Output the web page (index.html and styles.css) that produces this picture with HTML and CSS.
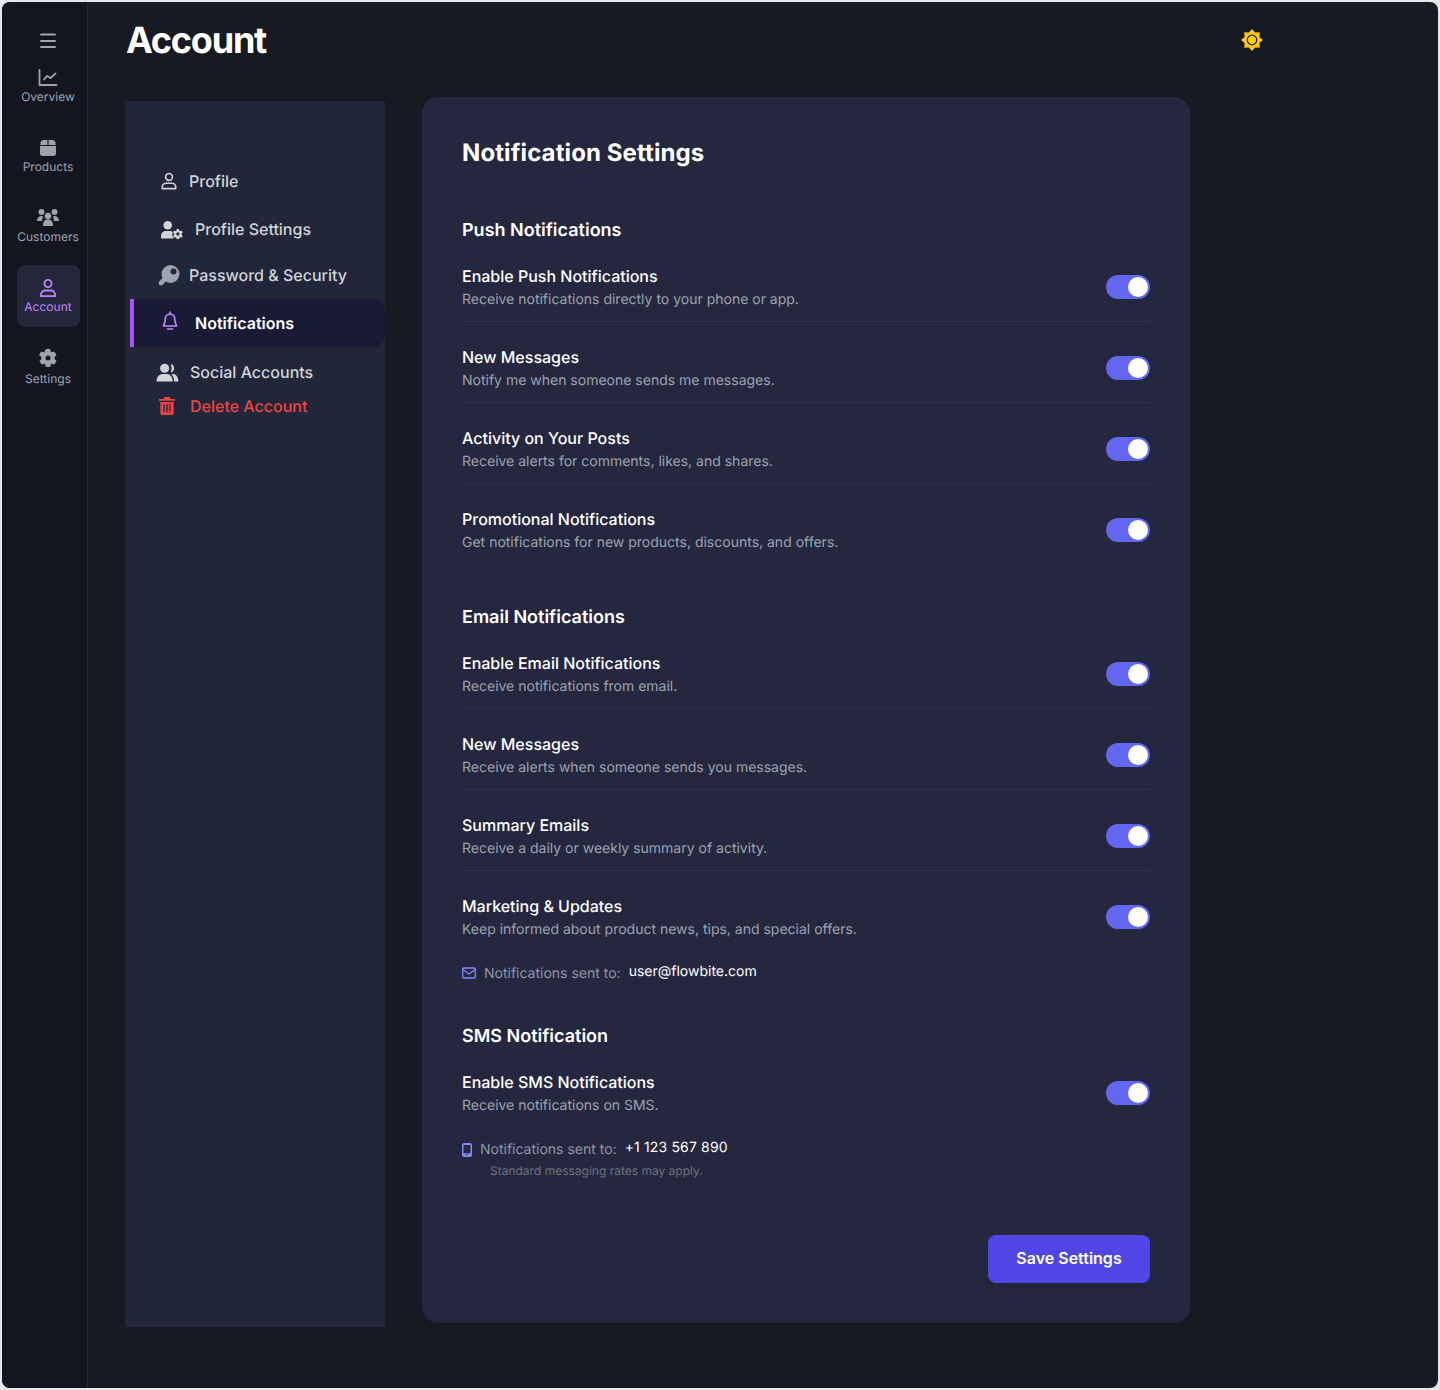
FILE: index.html
```html
<!DOCTYPE html>
<html lang="en">
<head>
<meta charset="utf-8">
<title>Account</title>
<link rel="stylesheet" href="styles.css">
</head>
<body>
<div class="frame">
  <aside class="rail">
    <button class="rail-menu" aria-label="Menu">
      <svg class="ic-16" viewBox="0 0 16 16" fill="none" stroke="currentColor" stroke-width="1.900" stroke-linecap="round"><path d="M1 1.500h14M1 8h14M1 14h14"/></svg>
    </button>
    <nav class="rail-nav">
      <a class="rail-item">
        <svg class="ic-20" viewBox="0 0 20 20" fill="none" stroke="currentColor" stroke-width="1.800" stroke-linecap="round" stroke-linejoin="round"><path d="M1.500 2v15h17"/><path d="M6 11.500l3-3.500 3.500 2 5-4.500"/></svg>
        <span>Overview</span>
      </a>
      <a class="rail-item">
        <svg class="ic-20" viewBox="0 0 20 20" fill="currentColor"><path d="M9.400 2H5.500C4 2 3 3 2.600 4.300L2.200 6.900h7.200zM10.600 2h3.900c1.500 0 2.500 1 2.900 2.300l.4 2.600h-7.200z"/><path d="M2 8h16v7.500c0 1.500-1 2.500-2.500 2.500h-11C3 18 2 17 2 15.500z"/></svg>
        <span>Products</span>
      </a>
      <a class="rail-item">
        <svg class="ic-24" viewBox="0 0 24 24" fill="currentColor"><circle cx="5.500" cy="6" r="3"/><circle cx="18.500" cy="6" r="3"/><circle cx="12" cy="10" r="3.200"/><path d="M1 15c0-3 2-5 4.500-5 .8 0 1.300.2 1.800.5-.8 1-1.300 2.500-1.300 4.500H1zM23 15c0-3-2-5-4.500-5-.8 0-1.300.2-1.800.5.800 1 1.300 2.500 1.300 4.500H23zM7 19c0-3.500 2-5.500 5-5.500s5 2 5 5.500v1H7z"/></svg>
        <span>Customers</span>
      </a>
      <a class="rail-item is-active">
        <svg class="ic-20" viewBox="0 0 20 20" fill="none" stroke="currentColor" stroke-width="1.800" stroke-linejoin="round"><circle cx="10" cy="5.500" r="3.600"/><path d="M3 18.200v-1.400c0-2.700 2-4.300 4.300-4.300h5.400c2.300 0 4.300 1.600 4.300 4.300v1.400z"/></svg>
        <span>Account</span>
      </a>
      <a class="rail-item rail-item-last">
        <svg class="ic-20" viewBox="0 0 20 20" fill="currentColor" fill-rule="evenodd"><path d="M7.800 1h4.400l.5 2.400 1.300.8 2.400-.8 2.200 3.800-1.900 1.600v2.400l1.900 1.600-2.200 3.800-2.400-.8-1.300.8-.5 2.400H7.800l-.5-2.400-1.300-.8-2.400.8-2.200-3.800 1.900-1.600V8.800L.9 7.200l2.200-3.800 2.400.8 1.300-.8zM10 7.500a2.500 2.500 0 1 0 0 5 2.500 2.500 0 0 0 0-5z"/></svg>
        <span>Settings</span>
      </a>
    </nav>
  </aside>

  <main class="main">
    <header class="topbar">
      <h1 class="page-title">Account</h1>
      <svg class="sun" viewBox="0 0 22 22"><polygon fill="#facc15" points="11,0 14.060,3.610 18.780,3.220 18.390,7.940 22,11 18.390,14.060 18.780,18.780 14.060,18.390 11,22 7.940,18.390 3.220,18.780 3.610,14.060 0,11 3.610,7.940 3.220,3.220 7.940,3.610"/><circle cx="11" cy="11" r="4.800" fill="#facc15" stroke="#1f2230" stroke-width="1.200"/></svg>
    </header>
    <div class="columns">
      <nav class="side">
        <a class="side-item side-profile">
          <svg class="ic-18" viewBox="0 0 20 20" fill="none" stroke="currentColor" stroke-width="1.800" stroke-linejoin="round"><circle cx="10" cy="5.500" r="3.800"/><path d="M2.500 18.500v-1.800c0-2.500 2-4.200 4.300-4.200h6.400c2.300 0 4.300 1.700 4.300 4.200v1.800z"/></svg>
          <span>Profile</span>
        </a>
        <a class="side-item side-psettings">
          <svg class="ic-psettings" viewBox="0 0 24 20" fill="currentColor"><circle cx="8" cy="5.500" r="4.500"/><path d="M1 19.500v-2.500c0-3.500 2.500-5.500 5-5.500h4c1.500 0 2.500.5 3.500 1.300-1 1.500-1 4.700 1 6.700z"/><path fill-rule="evenodd" d="M17.500 9.500h2.400l.4 1.700 1 .5 1.600-.5.900 2-1.200 1.100v1.300l1.200 1.100-.9 2-1.600-.5-1 .5-.4 1.700h-2.400l-.4-1.700-1-.5-1.600.5-.9-2 1.200-1.100v-1.300l-1.200-1.100.9-2 1.600.5 1-.5zM18.700 13a1.700 1.700 0 1 0 0 3.400 1.700 1.700 0 0 0 0-3.400z"/></svg>
          <span>Profile Settings</span>
        </a>
        <a class="side-item side-password">
          <svg class="ic-key" viewBox="0 0 22 22"><path fill="currentColor" fill-rule="evenodd" d="M12.500 1a9 9 0 1 1 0 18 9 9 0 0 1 0-18zm3 3.500a3 3 0 1 0 0 6 3 3 0 0 0 0-6z"/><path fill="none" stroke="currentColor" stroke-width="4.600" stroke-linecap="round" d="M7 15l-4 4"/></svg>
          <span>Password &amp; Security</span>
        </a>
        <a class="side-item side-notify">
          <svg class="ic-20" viewBox="0 0 20 20" fill="none" stroke="currentColor" stroke-width="1.700" stroke-linecap="round" stroke-linejoin="round"><path d="M10 1v2.200M10 3.200c-3 0-4.800 2.300-4.800 5 0 4.300-1.700 5.400-1.700 6.800h13c0-1.400-1.700-2.500-1.700-6.800 0-2.700-1.800-5-4.800-5zM7.500 18h5"/></svg>
          <span>Notifications</span>
        </a>
        <a class="side-item side-social">
          <svg class="ic-social" viewBox="0 0 24 20" fill="currentColor"><circle cx="9" cy="5.500" r="4.800"/><path d="M15.300 1a4.600 4.600 0 0 1 0 9c1.300-2.600 1.300-6.400 0-9zM.5 19.500c0-5 3-8 6-8h5c3 0 6 3 6 8z"/><path d="M16 11.500h2c3 0 5.500 3.500 5.500 8h-4.500c0-3-1-6.200-3-8z"/></svg>
          <span>Social Accounts</span>
        </a>
        <a class="side-item side-delete">
          <svg class="ic-trash" viewBox="0 0 18 20" fill="currentColor"><path d="M6 0h6l1 2h5v2H0V2h5z"/><path fill-rule="evenodd" d="M1.500 5.500h15V18c0 1.100-.9 2-2 2h-11c-1.100 0-2-.9-2-2zM5 8v9h1.500V8zm3.250 0v9h1.500V8zM11.500 8v9H13V8z"/></svg>
          <span>Delete Account</span>
        </a>
      </nav>

      <section class="card">
        <h2 class="card-title">Notification Settings</h2>

        <div class="group">
          <h3 class="group-title">Push Notifications</h3>
          <div class="row">
            <div class="row-text"><div class="row-name">Enable Push Notifications</div><div class="row-desc">Receive notifications directly to your phone or app.</div></div>
            <span class="toggle"><span class="knob"></span></span>
          </div>
          <div class="row">
            <div class="row-text"><div class="row-name">New Messages</div><div class="row-desc">Notify me when someone sends me messages.</div></div>
            <span class="toggle"><span class="knob"></span></span>
          </div>
          <div class="row">
            <div class="row-text"><div class="row-name">Activity on Your Posts</div><div class="row-desc">Receive alerts for comments, likes, and shares.</div></div>
            <span class="toggle"><span class="knob"></span></span>
          </div>
          <div class="row row-last">
            <div class="row-text"><div class="row-name">Promotional Notifications</div><div class="row-desc">Get notifications for new products, discounts, and offers.</div></div>
            <span class="toggle"><span class="knob"></span></span>
          </div>
        </div>

        <div class="group group-email">
          <h3 class="group-title">Email Notifications</h3>
          <div class="row">
            <div class="row-text"><div class="row-name">Enable Email Notifications</div><div class="row-desc">Receive notifications from email.</div></div>
            <span class="toggle"><span class="knob"></span></span>
          </div>
          <div class="row">
            <div class="row-text"><div class="row-name">New Messages</div><div class="row-desc">Receive alerts when someone sends you messages.</div></div>
            <span class="toggle"><span class="knob"></span></span>
          </div>
          <div class="row">
            <div class="row-text"><div class="row-name">Summary Emails</div><div class="row-desc">Receive a daily or weekly summary of activity.</div></div>
            <span class="toggle"><span class="knob"></span></span>
          </div>
          <div class="row row-last">
            <div class="row-text"><div class="row-name">Marketing &amp; Updates</div><div class="row-desc">Keep informed about product news, tips, and special offers.</div></div>
            <span class="toggle"><span class="knob"></span></span>
          </div>
          <div class="sent sent-email">
            <svg class="ic-mail" viewBox="0 0 14 12" fill="none" stroke="currentColor" stroke-width="1.300" stroke-linejoin="round"><rect x=".7" y="1" width="12.600" height="10" rx="1.200"/><path d="M.9 2.400L7 7l6.100-4.600"/></svg>
            <span class="sent-label">Notifications sent to:</span>
            <span class="sent-value">user@flowbite.com</span>
          </div>
        </div>

        <div class="group group-sms">
          <h3 class="group-title">SMS Notification</h3>
          <div class="row row-last">
            <div class="row-text"><div class="row-name">Enable SMS Notifications</div><div class="row-desc">Receive notifications on SMS.</div></div>
            <span class="toggle"><span class="knob"></span></span>
          </div>
          <div class="sent sent-sms">
            <svg class="ic-phone" viewBox="0 0 10 14" fill="currentColor" fill-rule="evenodd"><path d="M2 0h6a2 2 0 0 1 2 2v10a2 2 0 0 1-2 2H2a2 2 0 0 1-2-2V2a2 2 0 0 1 2-2zM1.500 2v8.300h7V2zM5 11a.8.8 0 1 0 0 1.600A.8.800 0 0 0 5 11z"/></svg>
            <span class="sent-label">Notifications sent to:</span>
            <span class="sent-value sent-phone">+1 123 567 890</span>
          </div>
          <div class="sent-note">Standard messaging rates may apply.</div>
        </div>

        <div class="actions"><button class="save">Save Settings</button></div>
      </section>
    </div>
  </main>
</div>
</body>
</html>
```
FILE: styles.css
```css
* { box-sizing: border-box; }
html, body { margin: 0; padding: 0; }
body {
  width: 1440px;
  height: 1390px;
  background: #e5e7eb;
  font-family: Inter, "Liberation Sans", sans-serif;
  color: #fff;
  overflow: hidden;
  text-rendering: geometricPrecision;
}
h1, h2, h3 { margin: 0; }
a { display: flex; text-decoration: none; }
svg { display: block; flex: none; }

.frame {
  display: flex;
  width: 1440px;
  height: 1390px;
  border: 2px solid #e5e7eb;
  border-radius: 10px;
  overflow: hidden;
  background: #171a23;
}

/* left rail */
.rail {
  width: 86px;
  flex: none;
  background: #131621;
  border-right: 1px solid #222636;
  display: flex;
  flex-direction: column;
  align-items: center;
  padding-left: 7px;
}
.rail-menu {
  background: none;
  border: 0;
  padding: 0;
  margin-top: 31px;
  height: 16px;
  color: #9ca3af;
}
.ic-16 { width: 16px; height: 16px; }
.ic-18 { width: 18px; height: 18px; }
.ic-20 { width: 20px; height: 20px; }
.ic-24 { width: 24px; height: 24px; }
.rail-nav {
  display: flex;
  flex-direction: column;
  gap: 8px;
  margin-top: 6px;
}
.rail-item {
  width: 63px;
  height: 62px;
  border-radius: 8px;
  flex-direction: column;
  align-items: center;
  padding-top: 13px;
  color: #9ca3af;
  font-size: 12px;
  line-height: 16px;
  white-space: nowrap;
}
.rail-item span { margin-top: 1px; }
.rail-item .ic-24 { margin: -2px 0; }
.rail-item.is-active { background: #24263a; color: #c084fc; }
.rail-item-last span { margin-top: 3px; }

/* main */
.main { flex: 1; min-width: 0; padding-left: 37px; }
.topbar {
  height: 95px;
  display: flex;
  align-items: flex-start;
  padding-top: 16px;
}
.page-title {
  font-size: 36px;
  line-height: 44px;
  font-weight: 700;
  letter-spacing: -1.200px;
  margin-left: 1px;
}
.sun {
  width: 22px;
  height: 22px;
  margin-left: 975px;
  margin-top: 11px;
}
.columns { display: flex; align-items: flex-start; }

/* secondary nav */
.side {
  width: 260px;
  height: 1226px;
  margin-top: 4px;
  background: #212638;
  flex: none;
  display: flex;
  flex-direction: column;
  padding-top: 56px;
}
.side-item {
  align-items: center;
  color: #d1d5db;
  font-size: 16px;
  line-height: 24px;
  font-weight: 500;
  white-space: nowrap;
}
.side-profile { height: 48px; padding-left: 35px; gap: 11px; }
.side-psettings { height: 48px; padding-left: 35px; gap: 12px; }
.side-password svg { color: #9ca3af; }
.ic-psettings { width: 23px; height: 19px; }
.side-password { height: 44px; padding-left: 33px; gap: 9px; }
.ic-key { width: 22px; height: 22px; }
.side-notify {
  height: 48px;
  margin-top: 2px;
  margin-left: 5px;
  padding-left: 26px;
  gap: 15px;
  border-left: 4px solid #a855f7;
  border-radius: 0 12px 12px 0;
  background: #191a36;
  color: #fff;
  font-weight: 600;
}
.side-notify svg { color: #c084fc; margin-top: -4px; }
.side-social { height: 48px; margin-top: 1px; padding-left: 31px; gap: 11px; }
.ic-social { width: 23px; height: 19px; }
.side-delete { height: 20px; padding-left: 34px; gap: 15px; color: #ef4444; }
.ic-trash { width: 16px; height: 18px; }

/* card */
.card {
  width: 768px;
  height: 1226px;
  margin-left: 37px;
  flex: none;
  background: #25273f;
  border-radius: 16px;
  padding: 40px;
  display: flex;
  flex-direction: column;
}
.card-title { font-size: 24px; line-height: 32px; font-weight: 700; letter-spacing: 0.100px; }
.group { margin-top: 48px; }
.group-email { margin-top: 52px; }
.group-sms { margin-top: 39px; }
.group-title { font-size: 18px; line-height: 28px; font-weight: 600; margin-bottom: 19px; }
.row {
  display: flex;
  align-items: flex-start;
  justify-content: space-between;
  height: 58px;
  margin-bottom: 23px;
  border-bottom: 1px solid #2f3249;
}
.row-last { height: 45px; margin-bottom: 0; border: 0; }
.row-name { font-size: 16px; line-height: 24px; font-weight: 500; }
.row-desc { font-size: 14px; line-height: 20px; color: #9ca3af; margin-top: 2px; }
.toggle {
  width: 44px;
  height: 24px;
  border-radius: 12px;
  background: #6366f1;
  display: flex;
  align-items: center;
  justify-content: flex-end;
  padding-right: 2px;
  margin-top: 11px;
}
.knob { width: 20px; height: 20px; border-radius: 50%; background: #fff; }

.sent { display: flex; align-items: flex-start; height: 20px; margin-top: 25px; font-size: 14px; line-height: 20px; gap: 8px; }
.sent-label { color: #8f94a6; }
.sent-value { color: #fff; margin-top: -2px; }
.sent-phone { letter-spacing: 0.150px; }
.ic-mail { width: 14px; height: 12px; color: #818cf8; margin: 3px 0 0 0; }
.ic-phone { width: 10px; height: 14px; color: #818cf8; margin: 3px 0 0 0; }
.sent-note { font-size: 12px; line-height: 16px; color: #6b7280; margin: 3px 0 0 28px; }

.actions { margin-top: auto; display: flex; justify-content: flex-end; }
.save {
  width: 162px;
  height: 48px;
  border: 0;
  border-radius: 8px;
  background: #4f46e5;
  color: #fff;
  font-family: inherit;
  font-size: 16px;
  font-weight: 600;
  padding: 0 0 2px;
  box-shadow: 0 4px 6px -1px rgba(0,0,0,.1);
}
```
